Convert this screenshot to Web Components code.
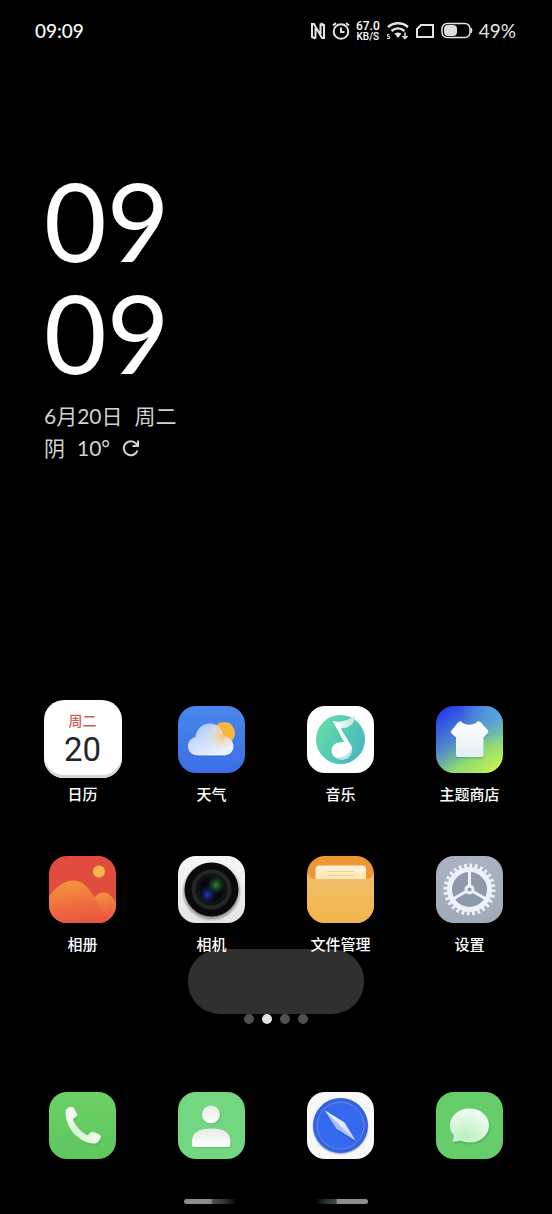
<!DOCTYPE html>
<html lang="zh-CN">
<head>
<meta charset="utf-8">
<meta name="viewport" content="width=device-width, initial-scale=1">
<title>桌面</title>
<style>
    body{
        margin: 0;
        background: #000;
        color: #fff;
        font-family: "Lato", "Noto Sans CJK SC", sans-serif;
    }
</style>
</head>
<body>
<home-screen></home-screen>

<script>
const define = (name, html, setup) => {
  const template = document.createElement("template");
  template.innerHTML = html;

  customElements.define(name, class extends HTMLElement {
    constructor() {
      super();
      const shadow = this.attachShadow({ mode: "open" });
      shadow.appendChild(template.content.cloneNode(true));
    }

    connectedCallback() {
      if (setup) setup(this, this.shadowRoot);
    }
  });
};

// artwork for the launcher tiles, all on a 67x67 canvas
const art = {
  weather: `
    <defs>
      <linearGradient id="bg" x2="0" y2="1"><stop stop-color="#4a87ed"/><stop offset="1" stop-color="#3a6fe6"/></linearGradient>
      <linearGradient id="cloud" x1="0" x2=".7" y2="1"><stop stop-color="#a9c4f8"/><stop offset="1" stop-color="#eef3fd"/></linearGradient>
      <radialGradient id="glow" cx="44" cy="30" r="15" gradientUnits="userSpaceOnUse"><stop stop-color="#fbcb78"/><stop offset="1" stop-color="#f3e3c8" stop-opacity="0"/></radialGradient>
      <path id="shape" d="M20 49.500C14 49.500 10 45.500 10 40.500C10 35.500 13 32 17.500 31C18.500 23 24.500 17.500 32 17.500C39 17.500 44.500 22.500 45.500 30.500C51 31 55.500 35 55.500 40.200C55.500 45.500 51.500 49.500 46 49.500Z"/>
    </defs>
    <rect width="67" height="67" fill="url(#bg)"/>
    <circle cx="46" cy="27" r="11" fill="#f7b73b"/>
    <use href="#shape" y="1" fill="#2857bd" opacity=".45"/>
    <use href="#shape" fill="url(#cloud)"/>
    <use href="#shape" fill="url(#glow)"/>`,
  music: `
    <defs>
      <linearGradient id="disc" x2="1" y2=".6"><stop stop-color="#68dfa6"/><stop offset="1" stop-color="#49b9bf"/></linearGradient>
      <linearGradient id="flag" x2="1"><stop stop-color="#fff"/><stop offset="1" stop-color="#bdeadc"/></linearGradient>
    </defs>
    <rect width="67" height="67" fill="#fff"/>
    <circle cx="33.500" cy="33.500" r="24.500" fill="url(#disc)"/>
    <path d="M26 15C34 17 42 14 47.500 9.500C48.500 15 45 21 37 22L30 23Z" fill="url(#flag)"/>
    <path d="M26 15L30 16.500L44.500 40C46.500 47 42 53.500 35 53.500C29 53.500 24.500 49.500 24.500 44.500C24.500 39 30 35.500 37 36Z" fill="#fff"/>
    <path d="M44.500 42C46 47 42 53.500 35 53.500C32 53.500 29.500 52.500 27.500 51C35 53 42 49 44.500 42Z" fill="#b7e7df"/>`,
  theme: `
    <defs>
      <linearGradient id="bg" x1=".1" y1="0" x2=".8" y2="1"><stop offset=".05" stop-color="#2740ee"/><stop offset=".45" stop-color="#548bc8"/><stop offset=".72" stop-color="#8ddb72"/><stop offset="1" stop-color="#c3ef55"/></linearGradient>
      <radialGradient id="sky" cx="1" cy="0" r=".65"><stop stop-color="#56a9e5"/><stop offset="1" stop-color="#56a9e5" stop-opacity="0"/></radialGradient>
      <linearGradient id="shirt" x2="0" y2="1"><stop stop-color="#fff"/><stop offset="1" stop-color="#e1eff2"/></linearGradient>
      <path id="shape" d="M25 15C28 20 38 20 42 15L45 16.500L52 24.500Q53 26 51.500 27.500L47.500 31.500V49Q47.500 51 45.500 51H22Q20 51 20 49V31.500L15.500 27.500Q14 26 15.500 24.500L22 16.500Z"/>
    </defs>
    <rect width="67" height="67" fill="url(#bg)"/>
    <rect width="67" height="67" fill="url(#sky)"/>
    <use href="#shape" y="2" fill="#357c91" opacity=".3"/>
    <use href="#shape" fill="url(#shirt)"/>`,
  album: `
    <defs>
      <linearGradient id="hill" x1=".4" x2=".6" y2="1"><stop stop-color="#f2953d"/><stop offset=".65" stop-color="#ee6740"/><stop offset="1" stop-color="#e95540"/></linearGradient>
    </defs>
    <rect width="67" height="67" fill="#e04d3e"/>
    <circle cx="50" cy="15.500" r="6" fill="#f7b64a"/>
    <path d="M40 50C46 39 50 36.500 54 36.500C60 36.500 63 41 67 46V67H40Z" fill="url(#hill)"/>
    <path d="M0 40C8 30 16 24.500 24 24.500C33 24.500 39 31 44 39C49 47 54 59 60 64V67H0Z" fill="url(#hill)"/>`,
  camera: `
    <defs>
      <linearGradient id="bg" x2="0" y2="1"><stop stop-color="#f6f6f6"/><stop offset="1" stop-color="#e4e4e4"/></linearGradient>
      <radialGradient id="green"><stop stop-color="#2f8d3c"/><stop offset="1" stop-color="#1b4f22" stop-opacity="0"/></radialGradient>
      <radialGradient id="blue"><stop stop-color="#263cc4"/><stop offset="1" stop-color="#121b60" stop-opacity="0"/></radialGradient>
      <radialGradient id="shade"><stop offset=".85" stop-color="#000" stop-opacity=".4"/><stop offset="1" stop-color="#000" stop-opacity="0"/></radialGradient>
    </defs>
    <rect width="67" height="67" fill="url(#bg)"/>
    <circle cx="33.500" cy="35.500" r="30" fill="url(#shade)"/>
    <circle cx="33.500" cy="33.500" r="27" fill="#0a0a0a"/>
    <circle cx="33.500" cy="33.500" r="18" fill="#101212" stroke="#242627" stroke-width="4"/>
    <circle cx="33.500" cy="33.500" r="12" fill="#07090c"/>
    <circle cx="38" cy="29" r="9" fill="url(#green)"/>
    <circle cx="29.500" cy="38.500" r="9" fill="url(#blue)"/>`,
  files: `
    <defs>
      <linearGradient id="front" x2="0" y2="1"><stop stop-color="#f1c06a"/><stop offset="1" stop-color="#f2b44b"/></linearGradient>
      <linearGradient id="paper" x2="0" y2="1"><stop stop-color="#fff3d6"/><stop offset="1" stop-color="#fbe2ae"/></linearGradient>
    </defs>
    <rect width="67" height="67" fill="#ee9736"/>
    <path d="M8.500 26V13.500Q8.500 9.500 12.500 9.500H55Q59 9.500 59 13.500V26Z" fill="url(#paper)"/>
    <path d="M20 15.500H47M20 19.500H47" stroke="#f0cf95"/>
    <path d="M0 17Q2 23 8 23H59Q65 23 67 17V67H0Z" fill="url(#front)"/>`,
  settings: `
    <defs>
      <linearGradient id="bg" x2="0" y2="1"><stop stop-color="#a9b3c3"/><stop offset="1" stop-color="#a0abba"/></linearGradient>
    </defs>
    <rect width="67" height="67" fill="url(#bg)"/>
    <circle cx="33.500" cy="33.500" r="18" fill="#8e9aac"/>
    <g fill="none" stroke="#edf2fa">
      <circle cx="33.500" cy="33.500" r="24" stroke-width="4" pathLength="56" stroke-dasharray="1 1"/>
      <circle cx="33.500" cy="33.500" r="20" stroke-width="5"/>
      <g stroke-width="3">
        <path d="M33.500 29V15M37.400 35.800L49.500 42.700M29.600 35.800L17.500 42.700"/>
        <circle cx="33.500" cy="33.500" r="3.500"/>
      </g>
    </g>`,
  phone: `
    <defs>
      <linearGradient id="bg" x2="0" y2="1"><stop stop-color="#6bd165"/><stop offset="1" stop-color="#5fc75f"/></linearGradient>
      <linearGradient id="ink" x2="1" y2="1"><stop stop-color="#fff"/><stop offset=".5" stop-color="#d6f4d4"/><stop offset="1" stop-color="#f4fcf3"/></linearGradient>
      <path id="shape" d="M16.500 20.500C16.500 17 19 15 22 15C25 15 25.500 17 26.500 19L28.500 23C28.700 24.500 26 25.500 24 27C25 32.500 32.500 40.500 38.500 43.500C40 41.500 41.500 39.500 43.500 39.700C45.500 40 50 42 51.800 43.500C52.500 45 49.500 51.500 46 51.500C38 52 29 47 23.500 40C19 34 16.500 26.500 16.500 20.500Z"/>
    </defs>
    <rect width="67" height="67" fill="url(#bg)"/>
    <use href="#shape" x="1" y="2" fill="#3b9c44" opacity=".3"/>
    <use href="#shape" fill="url(#ink)"/>`,
  contacts: `
    <defs>
      <linearGradient id="ink" x2="0" y2="1"><stop stop-color="#e6ebe6"/><stop offset="1" stop-color="#fff"/></linearGradient>
      <g id="shape"><circle cx="33" cy="22.500" r="9"/><path d="M14 53V49C14 41 21 36.500 33.500 36.500C46 36.500 52.500 41 52.500 49V53Q52.500 55 50.500 55H16Q14 55 14 53Z"/></g>
    </defs>
    <rect width="67" height="67" fill="#73d681"/>
    <use href="#shape" x="1" y="1" fill="#459d58" opacity=".5"/>
    <use href="#shape" fill="url(#ink)"/>`,
  browser: `
    <defs>
      <linearGradient id="light" x2="1" y2="1"><stop stop-color="#fff"/><stop offset="1" stop-color="#c7d6ff"/></linearGradient>
    </defs>
    <rect width="67" height="67" fill="#f7f7f8"/>
    <circle cx="33.500" cy="34.500" r="28" fill="#b9c5e2"/>
    <circle cx="33.500" cy="33.500" r="27.500" fill="#3563df"/>
    <circle cx="33.500" cy="33.500" r="23.500" fill="#3569ee" stroke="#6488e8"/>
    <path d="M18.500 21L30 38L48.500 51L38 33Z" fill="#1f48b5" opacity=".4"/>
    <path d="M18 18.500L37.500 30.500L48.500 48.500L29.500 36.500Z" fill="url(#light)"/>
    <path d="M18 18.500L29.500 36.500L48.500 48.500L33.500 34Z" fill="#aabff5"/>`,
  messages: `
    <defs>
      <radialGradient id="ink" cx=".4" cy=".8" r=".8"><stop stop-color="#b9efc2"/><stop offset="1" stop-color="#f3fcf4"/></radialGradient>
      <path id="shape" d="M33.500 16.500C44.500 16.500 53 24 53 33.500C53 43 44.500 50.500 33.500 50.500C30 50.500 27 49.800 24.300 48.500C22 49.500 19.500 49.800 17 49.500C16 49.300 16.500 48.600 17 48C18 46.500 18 44.500 17.500 43C15.300 40.300 14 37 14 33.500C14 24 22.500 16.500 33.500 16.500Z"/>
    </defs>
    <rect width="67" height="67" fill="#65ce6b"/>
    <use href="#shape" x="1" y="2" fill="#3f9f4b" opacity=".45"/>
    <use href="#shape" fill="url(#ink)"/>`
};

define("app-icon", `
<style>
    :host{
        display: block;
    }
    button{
        display: flex;
        flex-direction: column;
        align-items: center;
        gap: 5px;
        width: 100%;
        padding: 0;
        border: 0;
        background: none;
        color: inherit;
        font: 500 15px/22px "Noto Sans CJK SC", sans-serif;
    }
    .tile{
        display: grid;
        place-items: center;
        height: 78px;
    }
    svg{
        display: block;
        width: 67px;
        height: 67px;
        border-radius: 18px;
    }
</style>
<button type="button">
    <span class="tile"></span>
    <slot></slot>
</button>
`, (host, shadow) => {
  const tile = shadow.querySelector(".tile");
  tile.innerHTML = host.getAttribute("art") === "calendar"
    ? "<calendar-tile></calendar-tile>"
    : `<svg viewBox="0 0 67 67" aria-hidden="true">${art[host.getAttribute("art")]}</svg>`;

  // dock items have no visible caption
  if (host.hasAttribute("label")) {
    shadow.querySelector("button").setAttribute("aria-label", host.getAttribute("label"));
  }
});

define("calendar-tile", `
<style>
    :host{
        display: flex;
        flex-direction: column;
        align-items: center;
        box-sizing: border-box;
        width: 78px;
        height: 78px;
        padding-top: 10px;
        border-radius: 20px;
        background: #fff;
        box-shadow: inset 0 -3px #d4d4d4;
    }
    .weekday{
        color: #d9594f;
        font: 500 14px/20px "Noto Sans CJK SC", sans-serif;
    }
    .day{
        color: #262626;
        font: 400 33px/40px Roboto, sans-serif;
    }
</style>
<span class="weekday">周二</span>
<span class="day">20</span>
`);

define("status-bar", `
<style>
    :host{
        display: flex;
        align-items: center;
        justify-content: space-between;
        height: 62px;
        padding: 0 36px 0 35px;
        font-size: 19px;
        line-height: 24px;
    }
    time{
        font-weight: 500;
    }
    .icons{
        display: flex;
        align-items: center;
        gap: 6px;
        color: #e4e4e4;
    }
    svg{
        display: block;
        fill: none;
        stroke: currentColor;
        stroke-width: 2;
    }
    .speed{
        color: #fff;
        text-align: center;
        font: 500 12px/10px Roboto, sans-serif;
    }
    .speed small{
        font-size: 10px;
    }
</style>
<time>09:09</time>
<div class="icons">
    <svg width="16" height="18" viewBox="0 0 16 18" aria-label="NFC"><path d="M5.500 16.500L2 15V2H4L12 16H14V3L10.500 1.500M5.500 6V16.500M10.500 1.500V12"/></svg>
    <svg width="18" height="18" viewBox="0 0 18 18" aria-label="闹钟"><circle cx="9" cy="9.500" r="7.300"/><path d="M9 5.500V10H12.500M1 3.500L4 1M14 1L17 3.500"/></svg>
    <span class="speed">67.0<br><small>KB/S</small></span>
    <svg width="23" height="18" viewBox="0 0 23 18" aria-label="无线网络">
        <path d="M2 5C8 0 16 0 22 5M5.500 9C9.500 5.500 14.500 5.500 18.500 9" stroke-width="2.500"/>
        <path d="M8.500 11.500Q12 9.500 15.500 11.500L12 16Z" fill="currentColor" stroke="none"/>
        <path d="M19 10.500V16M16.500 14L19 16.500L21.500 14" stroke-width="1.500"/>
        <path d="M3.500 12.500H1.500V14.500H3.500V16.500H1" stroke-width="1"/>
    </svg>
    <svg width="20" height="16" viewBox="0 0 20 16" aria-label="SIM卡"><path d="M6 2H18V14H2V6Z"/></svg>
    <svg width="32" height="18" viewBox="0 0 32 18" aria-label="电池">
        <rect x="1" y="1.500" width="28" height="14" rx="5" stroke-width="1.500"/>
        <path d="M30 6Q32 8.500 30 11Z" fill="currentColor" stroke-width="1"/>
        <rect x="3" y="3" width="13" height="11" rx="4" fill="#ddd" stroke="none"/>
    </svg>
    <span>49%</span>
</div>
`);

define("clock-widget", `
<style>
    :host{
        display: block;
        padding: 102px 44px 0;
    }
    time{
        display: block;
        font-size: 108px;
        line-height: 112px;
    }
    .info{
        margin-top: 12px;
        color: #d2d2d2;
        font-size: 21px;
        line-height: 32px;
    }
    .row{
        display: flex;
        align-items: center;
        gap: 12px;
    }
    button{
        padding: 0;
        border: 0;
        background: none;
        color: inherit;
    }
    svg{
        display: block;
    }
</style>
<time datetime="09:09">09<br>09</time>
<div class="info">
    <div class="row"><span>6月20日</span><span>周二</span></div>
    <div class="row">
        <span>阴</span><span>10°</span>
        <button type="button" aria-label="刷新">
            <svg width="18" height="18" viewBox="0 0 18 18" fill="none" stroke="currentColor" stroke-width="2"><path d="M15.500 11.500A7 7 0 1 1 14 4.500L15.500 6M16 1.500V7H10.500"/></svg>
        </button>
    </div>
</div>
`);

define("app-grid", `
<style>
    :host{
        display: grid;
        grid-template-columns: repeat(4, 1fr);
        row-gap: 45px;
        padding: 0 18px;
        position: relative;
        z-index: 1;
    }
</style>
<slot></slot>
`);

define("page-dots", `
<style>
    :host{
        display: flex;
        justify-content: center;
        gap: 8px;
        position: relative;
        margin: 59px 0 62px;
    }
    i{
        width: 10px;
        height: 10px;
        border-radius: 50%;
        background: #505050;
    }
    .current{
        background: #e2e2e2;
    }
    /* empty toast floating over the bottom row */
    .toast{
        position: absolute;
        bottom: 100%;
        left: 50%;
        width: 176px;
        height: 65px;
        margin-left: -88px;
        border-radius: 32px;
        background: #303030;
    }
</style>
<div class="toast"></div>
<i></i><i class="current"></i><i></i><i></i>
`);

define("gesture-bar", `
<style>
    :host{
        display: flex;
        justify-content: center;
        gap: 78px;
        padding: 35px 0 10px;
    }
    i{
        width: 53px;
        height: 5px;
        border-radius: 3px;
        background: linear-gradient(90deg, #8d8d8d 50%, #4c4c4c 55%, #373737 75%, #000);
    }
    i + i{
        background: linear-gradient(270deg, #8d8d8d 58%, #3d4848 60%, #26302e 80%, #000);
    }
</style>
<i></i><i></i>
`);

define("home-screen", `
<style>
    :host{
        display: flex;
        flex-direction: column;
        min-height: 100vh;
    }
    clock-widget{
        flex: 1;
    }
</style>
<status-bar></status-bar>
<clock-widget></clock-widget>
<app-grid>
    <app-icon art="calendar">日历</app-icon>
    <app-icon art="weather">天气</app-icon>
    <app-icon art="music">音乐</app-icon>
    <app-icon art="theme">主题商店</app-icon>
    <app-icon art="album">相册</app-icon>
    <app-icon art="camera">相机</app-icon>
    <app-icon art="files">文件管理</app-icon>
    <app-icon art="settings">设置</app-icon>
</app-grid>
<page-dots></page-dots>
<app-grid>
    <app-icon art="phone" label="电话"></app-icon>
    <app-icon art="contacts" label="联系人"></app-icon>
    <app-icon art="browser" label="浏览器"></app-icon>
    <app-icon art="messages" label="信息"></app-icon>
</app-grid>
<gesture-bar></gesture-bar>
`);
</script>
</body>
</html>
